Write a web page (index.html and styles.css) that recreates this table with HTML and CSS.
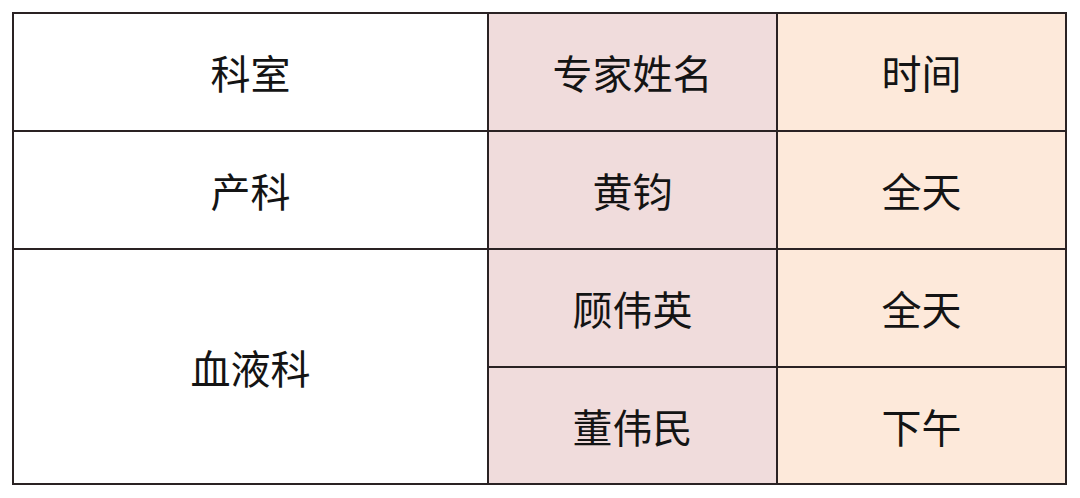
FILE: index.html
```html
<!DOCTYPE html>
<html lang="zh-CN">
<head>
<meta charset="utf-8">
<title>专家出诊表</title>
<link rel="stylesheet" href="styles.css">
</head>
<body>
<div class="table">
  <div class="cell dept">科室</div>
  <div class="cell name">专家姓名</div>
  <div class="cell time">时间</div>
  <div class="cell dept">产科</div>
  <div class="cell name">黄钧</div>
  <div class="cell time">全天</div>
  <div class="cell dept span2">血液科</div>
  <div class="cell name">顾伟英</div>
  <div class="cell time">全天</div>
  <div class="cell name">董伟民</div>
  <div class="cell time">下午</div>
</div>
</body>
</html>
```
FILE: styles.css
```css
html, body {
  margin: 0;
  padding: 0;
  background: #ffffff;
}
body {
  padding: 12px;
  font-family: "Noto Sans CJK SC", "Noto Sans", sans-serif;
}
.table {
  display: grid;
  grid-template-columns: 473px 287px 287px;
  grid-template-rows: 116px 116px 116px 115px;
  gap: 2px;
  padding: 2px;
  width: max-content;
  background: #2a2223;
}
.cell {
  display: flex;
  align-items: center;
  justify-content: center;
  font-size: 40px;
  line-height: 1;
  color: #141414;
}
.dept { background: #ffffff; }
.name { background: #f0dcdc; }
.time { background: #fde9da; }
.span2 { grid-row: span 2; }
```
